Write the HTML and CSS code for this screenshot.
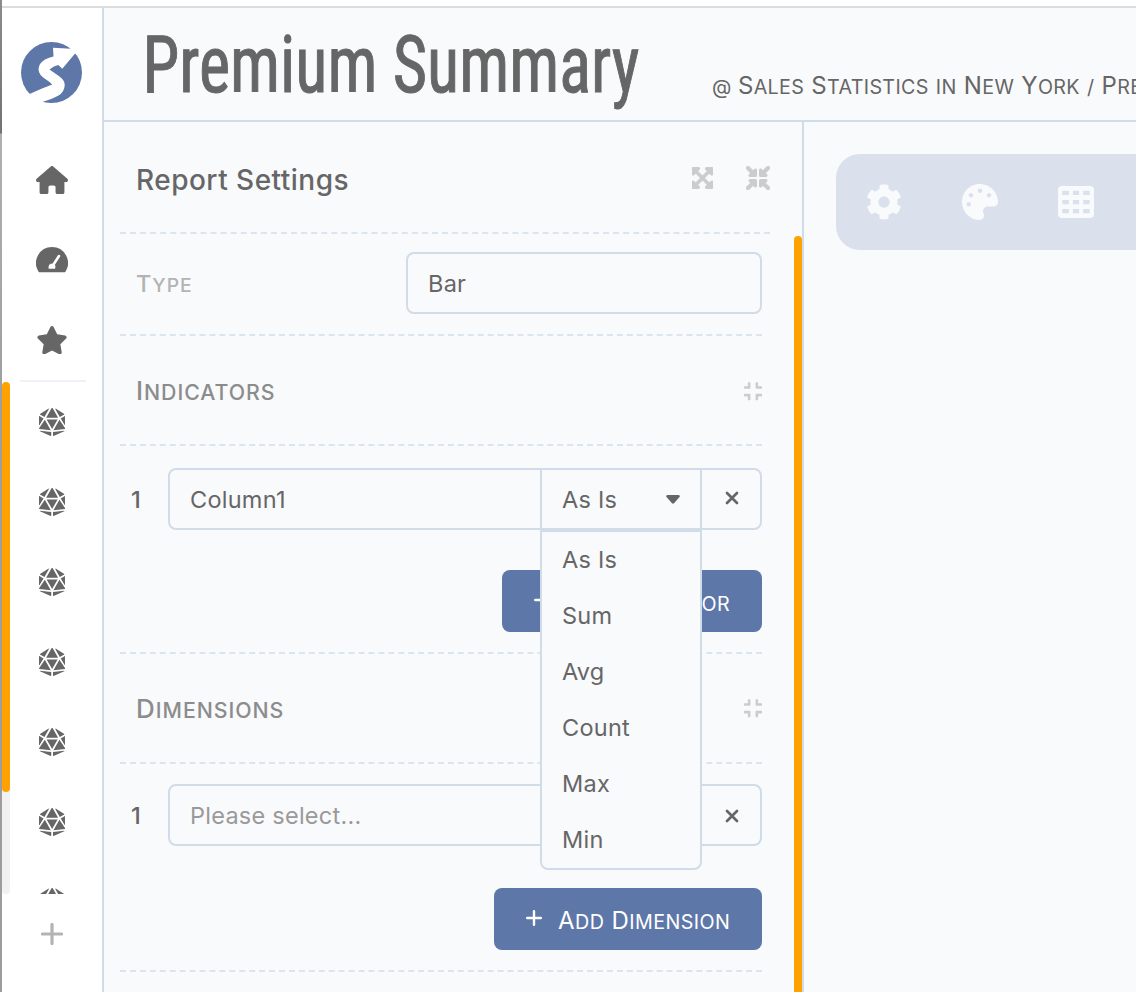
FILE: index.html
```html
<!DOCTYPE html>
<html lang="en">
<head>
<meta charset="utf-8">
<title>Premium Summary</title>
<link rel="stylesheet" href="styles.css">
</head>
<body>
<svg class="defs" aria-hidden="true">
  <symbol id="d20" viewBox="0 0 480 512"><path d="M106.75 215.06L1.2 370.95c-3.08 5 .1 11.5 5.93 12.14l208.26 22.07-108.64-190.1zM7.41 315.43L82.7 193.08 6.06 147.1c-2.67-1.62-6.06.3-6.06 3.43v162.81c0 4.03 5.29 5.53 7.41 2.09zM18.25 423.6l194.4 87.66c5.3 2.45 11.35-1.43 11.35-7.26v-65.67l-203.55-22.3c-4.45-.5-6.23 5.59-2.2 7.57zm81.22-257.78L179.4 22.88c4.34-7.06-3.59-15.25-10.78-11.14L17.81 110.35c-2.47 1.62-2.39 5.26.13 6.78l81.53 48.69zM240 176h109.21L253.63 7.62C250.5 2.54 245.25 0 240 0s-10.5 2.54-13.63 7.62L130.79 176H240zm233.94-28.9l-76.64 45.99 75.29 122.35c2.11 3.44 7.41 1.94 7.41-2.1V150.53c0-3.11-3.39-5.03-6.06-3.43zm-93.41 18.72l81.53-48.7c2.53-1.52 2.6-5.16.13-6.78l-150.81-98.6c-7.19-4.11-15.12 4.08-10.78 11.14l79.93 142.94zm79.02 250.21L256 438.32v65.67c0 5.84 6.05 9.71 11.35 7.26l194.4-87.66c4.03-1.97 2.25-8.06-2.2-7.56zm-86.3-200.97l-108.63 190.1 208.26-22.07c5.83-.65 9.01-7.14 5.93-12.14L373.25 215.06zM240 208H139.57L240 383.75 340.43 208H240z"/></symbol>
  <symbol id="compress" viewBox="0 0 448 512"><path d="M436 192H312c-13.3 0-24-10.7-24-24V44c0-6.600 5.400-12 12-12h40c6.600 0 12 5.400 12 12v84h84c6.600 0 12 5.400 12 12v40c0 6.600-5.400 12-12 12zm-276-24V44c0-6.600-5.400-12-12-12h-40c-6.600 0-12 5.400-12 12v84H12c-6.600 0-12 5.400-12 12v40c0 6.600 5.400 12 12 12h124c13.300 0 24-10.700 24-24zm0 300V344c0-13.300-10.700-24-24-24H12c-6.600 0-12 5.400-12 12v40c0 6.600 5.400 12 12 12h84v84c0 6.600 5.400 12 12 12h40c6.600 0 12-5.400 12-12zm192 0v-84h84c6.600 0 12-5.400 12-12v-40c0-6.600-5.400-12-12-12H312c-13.300 0-24 10.700-24 24v124c0 6.600 5.400 12 12 12h40c6.600 0 12-5.400 12-12z"/></symbol>
  <symbol id="cross" viewBox="0 0 14 14"><path d="M2 2L12 12M12 2L2 12" fill="none" stroke="currentColor" stroke-width="2.700" stroke-linecap="round"/></symbol>
</svg>
<div class="window">
  <div class="edge"></div>
  <div class="app">
    <nav class="sidebar">
      <svg class="logo" viewBox="0 0 61 61"><circle cx="30.500" cy="30.500" r="30.500" fill="#5e77a9"/><path d="M32 5.800L50 6.800L62 0L54.500 11L41.300 26.800L37.300 22.900Q33 23.500 28.500 27.500L38.500 34.500Q44 38.500 43.700 43Q43.500 50 37.500 53.500Q31 57 21 60L10 62L0 57L8.500 52L21 46.500Q27.500 44 31.200 42.500Q29 40 25 37.500Q17.500 33 17.500 27Q18 21 24 17.500Q28 15.500 32.500 14.500Z" fill="#fff"/></svg>
      <div class="nav-main">
        <div class="nav-item"><svg class="i-home" viewBox="0 0 576 512"><path d="M575.8 255.500c0 18-15 32.100-32 32.100h-32l.7 160.200c0 2.700-.2 5.400-.5 8.100V472c0 22.100-17.900 40-40 40H392c-22.100 0-40-17.900-40-40V384c0-17.700-14.300-32-32-32H256c-17.700 0-32 14.300-32 32v88c0 22.100-17.900 40-40 40H104c-22.100 0-40-17.900-40-40V287.600H32c-18 0-32-14-32-32.100c0-9 3-17 10-24L266.400 8c7-7 15-8 22-8s15 2 21 7L564.800 231.500c8 7 12 15 11 24z"/></svg></div>
        <div class="nav-item"><svg class="i-gauge" viewBox="0 0 32 26"><path d="M16 0a16 16 0 0 1 13.600 24.400Q29 25.300 28 25.300H4Q3 25.300 2.400 24.400A16 16 0 0 1 16 0z"/><path d="M23 9L17.500 17.500" stroke="#fff" stroke-width="2.600" stroke-linecap="round"/><path d="M12.600 21.800q-.7-4.600 3.400-5.200l3.300 2q.4 1.700-.3 3.200z" fill="#fff"/></svg></div>
        <div class="nav-item"><svg class="i-star" viewBox="0 0 576 512"><path d="M316.900 18C311.600 7 300.400 0 288.100 0s-23.400 7-28.800 18L195 150.300 51.400 171.500c-12 1.800-22 10.200-25.700 21.700s-.7 24.200 7.900 32.700L137.800 329 113.200 474.700c-2 12 3 24.200 12.900 31.300s23 8 33.800 2.300l128.300-68.500 128.300 68.500c10.800 5.700 23.900 4.900 33.800-2.300s14.900-19.300 12.900-31.300L438.500 329 542.700 225.900c8.600-8.500 11.700-21.200 7.900-32.700s-13.700-19.900-25.700-21.700L381.200 150.300 316.900 18z"/></svg></div>
      </div>
      <div class="nav-rule"></div>
      <div class="nav-scroll">
        <div class="side-track"><div class="side-thumb"></div></div>
        <div class="nav-list">
          <div class="nav-item"><svg class="i-d20"><use href="#d20"/></svg></div>
          <div class="nav-item"><svg class="i-d20"><use href="#d20"/></svg></div>
          <div class="nav-item"><svg class="i-d20"><use href="#d20"/></svg></div>
          <div class="nav-item"><svg class="i-d20"><use href="#d20"/></svg></div>
          <div class="nav-item"><svg class="i-d20"><use href="#d20"/></svg></div>
          <div class="nav-item"><svg class="i-d20"><use href="#d20"/></svg></div>
          <div class="nav-item"><svg class="i-d20"><use href="#d20"/></svg></div>
        </div>
      </div>
      <div class="nav-item nav-add"><svg class="i-add" viewBox="0 0 22 22"><path d="M11 1.500V20.500M1.500 11H20.500" fill="none" stroke="currentColor" stroke-width="3.200" stroke-linecap="round"/></svg></div>
    </nav>
    <main class="main">
      <header class="header">
        <svg class="title" role="heading" aria-level="1"><text x="-1.500" y="83.500" textLength="497" lengthAdjust="spacingAndGlyphs">Premium Summary</text></svg>
        <div class="crumb caps"><span class="at">@</span> <span>Sales</span> <span>Statistics</span> <i>in</i> <span>New</span> <span>York</span> <span>/</span> <span>Premium</span></div>
      </header>
      <div class="body">
        <section class="panel">
          <div class="panel-head">
            <h2>Report Settings</h2>
            <div class="head-icons">
              <svg class="i-max" viewBox="0 0 448 512"><path d="M448 344v112a23.940 23.940 0 0 1-24 24H312c-21.390 0-32.090-25.900-17-41l36.200-36.200L224 295.600 116.770 402.900 153 439c15.090 15.100 4.390 41-17 41H24a23.940 23.940 0 0 1-24-24V344c0-21.400 25.890-32.100 41-17l36.190 36.200L184.460 256 77.180 148.700 41 185c-15.100 15.100-41 4.400-41-17V56a23.940 23.940 0 0 1 24-24h112c21.390 0 32.090 25.900 17 41l-36.200 36.200L224 216.400l107.230-107.300L295 73c-15.090-15.100-4.390-41 17-41h112a23.940 23.940 0 0 1 24 24v112c0 21.400-25.890 32.100-41 17l-36.190-36.200L263.540 256l107.280 107.300L407 327.100c15.100-15.200 41-4.500 41 16.900z"/></svg>
              <svg class="i-min" viewBox="0 0 512 512"><path d="M200 288H88c-21.400 0-32.100 25.800-17 41l32.900 31-99.200 99.300c-6.200 6.200-6.200 16.400 0 22.600l25.400 25.400c6.200 6.200 16.400 6.200 22.600 0L152 408l31.100 33c15.100 15.100 40.900 4.400 40.900-17V312c0-13.300-10.700-24-24-24zm112-64h112c21.400 0 32.100-25.900 17-41l-33-31 99.300-99.300c6.200-6.200 6.200-16.400 0-22.600L481.900 4.700c-6.200-6.200-16.400-6.200-22.600 0L360 104l-31.100-33C313.800 55.900 288 66.600 288 88v112c0 13.300 10.700 24 24 24zm96 136l33-31.100c15.100-15.100 4.400-40.900-17-40.900H312c-13.300 0-24 10.700-24 24v112c0 21.400 25.900 32.100 41 17l31-32.900 99.300 99.300c6.200 6.200 16.400 6.200 22.600 0l25.400-25.400c6.200-6.200 6.200-16.400 0-22.600L408 360zM183 71.100L152 104 52.700 4.700c-6.200-6.200-16.400-6.200-22.600 0L4.700 30.100c-6.200 6.200-6.200 16.400 0 22.600L104 152l-33 31.100C55.900 198.200 66.600 224 88 224h112c13.300 0 24-10.700 24-24V88c0-21.300-25.900-32-41-16.900z"/></svg>
            </div>
          </div>
          <div class="panel-scroll">
            <div class="settings">
              <div class="type-row"><div class="type-label caps"><span>Type</span></div><div class="box type-box">Bar</div></div>
              <div class="section-head"><h3 class="caps"><span>Indicators</span></h3><svg class="i-compress"><use href="#compress"/></svg></div>
              <div class="section indicators">
                <div class="row">
                  <span class="num">1</span>
                  <div class="box group">
                    <div class="cell grow">Column1</div>
                    <div class="cell func">As Is<svg class="i-caret" viewBox="0 0 14 9"><path d="M1.300 0H12.700Q14.500.5 13.500 2L8 8.300Q7 9.200 6 8.300L.5 2Q-.5.5 1.300 0z"/></svg>
                      <div class="menu"><div>As Is</div><div>Sum</div><div>Avg</div><div>Count</div><div>Max</div><div>Min</div></div>
                    </div>
                    <div class="cell remove"><svg class="i-cross"><use href="#cross"/></svg></div>
                  </div>
                </div>
                <button class="add add-indicator"><svg class="i-plus" viewBox="0 0 16 16"><path d="M8 1.200V14.800M1.200 8H14.800" stroke="currentColor" stroke-width="2.400" stroke-linecap="round"/></svg><div class="caps"><span>Add</span> <span>Indicator</span></div></button>
              </div>
              <div class="section-head"><h3 class="caps"><span>Dimensions</span></h3><svg class="i-compress up"><use href="#compress"/></svg></div>
              <div class="section dimensions">
                <div class="row">
                  <span class="num">1</span>
                  <div class="box group">
                    <div class="cell grow placeholder">Please select...</div>
                    <div class="cell remove"><svg class="i-cross low"><use href="#cross"/></svg></div>
                  </div>
                </div>
                <button class="add add-dimension"><svg class="i-plus" viewBox="0 0 16 16"><path d="M8 1.200V14.800M1.200 8H14.800" stroke="currentColor" stroke-width="2.400" stroke-linecap="round"/></svg><div class="caps"><span>Add</span> <span>Dimension</span></div></button>
              </div>
            </div>
            <div class="panel-thumb"></div>
          </div>
        </section>
        <section class="canvas">
          <div class="toolbar">
            <svg class="tool" viewBox="0 0 512 512"><path d="M487.400 315.700l-42.600-24.600c4.300-23.200 4.300-47 0-70.200l42.600-24.600c4.900-2.800 7.100-8.600 5.500-14-11.100-35.600-30-67.800-54.700-94.600-3.800-4.100-10-5.100-14.800-2.300L380.800 110c-17.900-15.400-38.500-27.300-60.800-35.100V25.800c0-5.600-3.900-10.500-9.400-11.700-36.700-8.200-74.300-7.800-109.200 0-5.500 1.200-9.400 6.100-9.400 11.700V75c-22.200 7.900-42.800 19.800-60.800 35.100L88.700 85.500c-4.900-2.800-11-1.900-14.800 2.300-24.700 26.700-43.600 58.900-54.700 94.600-1.700 5.400.6 11.200 5.500 14L67.300 221c-4.300 23.200-4.300 47 0 70.200l-42.600 24.600c-4.900 2.800-7.100 8.600-5.500 14 11.100 35.600 30 67.800 54.700 94.600 3.800 4.100 10 5.100 14.800 2.300l42.600-24.600c17.900 15.400 38.500 27.300 60.800 35.100v49.200c0 5.600 3.900 10.500 9.400 11.700 36.700 8.200 74.300 7.800 109.200 0 5.500-1.200 9.400-6.100 9.400-11.700v-49.200c22.200-7.900 42.800-19.800 60.800-35.100l42.600 24.600c4.900 2.800 11 1.900 14.800-2.300 24.700-26.700 43.600-58.900 54.700-94.600 1.500-5.500-.7-11.300-5.600-14.100zM256 336c-44.100 0-80-35.900-80-80s35.900-80 80-80 80 35.900 80 80-35.900 80-80 80z"/></svg>
            <svg class="tool" viewBox="0 0 512 512"><path d="M204.300 5C104.900 24.400 24.800 104.300 5.200 203.400c-37 187 131.700 326.400 258.800 306.700 41.200-6.400 61.400-54.600 42.500-91.700-23.100-45.400 9.900-98.400 60.900-98.400h79.700c35.800 0 64.800-29.600 64.900-65.300C511.500 97.100 368.100-26.900 204.300 5zM96 320c-17.700 0-32-14.300-32-32s14.300-32 32-32 32 14.300 32 32-14.300 32-32 32zm32-128c-17.700 0-32-14.300-32-32s14.300-32 32-32 32 14.300 32 32-14.300 32-32 32zm128-64c-17.700 0-32-14.300-32-32s14.300-32 32-32 32 14.300 32 32-14.300 32-32 32zm128 64c-17.700 0-32-14.300-32-32s14.300-32 32-32 32 14.300 32 32-14.300 32-32 32z"/></svg>
            <svg class="tool" viewBox="0 0 36 36"><path fill-rule="evenodd" d="M4 2H32Q36 2 36 6V30Q36 34 32 34H4Q0 34 0 30V6Q0 2 4 2zM4.300 6.800v4.300h6.600v-4.300zM14.900 6.800v4.300h6.200v-4.300zM25.200 6.800v4.300h6.400v-4.300zM4.300 15.900v4.300h6.600v-4.300zM14.900 15.900v4.300h6.200v-4.300zM25.200 15.900v4.300h6.400v-4.300zM4.300 25v4.300h6.600v-4.300zM14.900 25v4.300h6.200v-4.300zM25.200 25v4.300h6.400v-4.300z"/></svg>
          </div>
        </section>
      </div>
    </main>
  </div>
</div>
</body>
</html>
```
FILE: styles.css
```css
* { box-sizing: border-box; }
body {
  margin: 0;
  width: 1136px;
  height: 992px;
  overflow: hidden;
  background: #fff;
  color: #666;
  font: 400 23.500px/1 Inter, sans-serif;
}
svg { display: block; flex: none; fill: currentColor; }
h2, h3 { margin: 0; font-weight: 500; }
.defs { display: none; }
.caps { white-space: nowrap; text-transform: uppercase; }
.caps span { display: inline-block; font-size: 0.820em; }
.caps span::first-letter { font-size: 1.220em; }
.caps i { font-style: normal; font-size: 0.820em; }
.window { display: flex; height: 992px; }
.edge { flex: none; width: 2px; background: linear-gradient(#8c8c8c 0, #737373 133px, #b0b0b0 134px, #9e9e9e 400px, #9c9c9c 100%); }
.app { flex: 1; min-width: 0; display: flex; margin-top: 6px; border-top: 2px solid #dadddf; height: 986px; }

.sidebar { flex: none; width: 102px; border-right: 2px solid #d0dce8; display: flex; flex-direction: column; background: #fff; }
.logo { width: 61px; height: 61px; margin: 34px 0 29px 19px; }
.nav-item { flex: none; height: 80px; display: flex; align-items: center; justify-content: center; }
.nav-main { height: 248px; padding-top: 8px; }
.nav-rule { width: 66px; height: 2px; margin: 0 0 0 18px; background: #eff1f6; }
.nav-scroll { height: 512px; display: flex; overflow: hidden; }
.side-track { width: 8px; height: 512px; border-radius: 4px; background: #f1f1f1; }
.side-thumb { height: 410px; border-radius: 4px; background: #ffa200; }
.nav-list { width: 84px; }
.nav-add { color: #b3b3b3; }
.i-home { width: 32px; height: 28.400px; }
.i-gauge { width: 32px; height: 26px; }
.i-star { width: 32px; height: 28.400px; }
.i-d20 { width: 26.250px; height: 28px; }
.i-add { width: 22px; height: 22px; }

.main { flex: 1; min-width: 0; background: #f9fafc; display: flex; flex-direction: column; }
.header { height: 114px; border-bottom: 2px solid #d0dce8; display: flex; overflow: hidden; }
.title { width: 510px; height: 112px; margin-left: 40px; overflow: visible; font: 400 80.500px "Liberation Sans Narrow", Roboto, sans-serif; font-stretch: 75%; stroke: #666; stroke-width: 1px; }
.crumb { margin: 66px 0 0 58px; font-size: 24px; letter-spacing: 0.350px; }
.crumb .at { font-size: 20px; letter-spacing: -0.500px; }
.crumb .at::first-letter { font-size: 20px; }
.body { flex: 1; min-height: 0; display: flex; }
.panel { flex: none; width: 700px; border-right: 2px solid #d0dce8; display: flex; flex-direction: column; }
.panel-head { height: 112px; margin: 0 32px 0 16px; padding: 0 0 0 16px; border-bottom: 2px dashed #dbe5ee; display: flex; align-items: center; justify-content: space-between; }
.panel-head h2 { font-size: 28px; padding-top: 6px; letter-spacing: 0.480px; }
.head-icons { display: flex; align-items: center; gap: 33.500px; color: #ccc; padding-top: 2px; }
.head-icons path { stroke: currentColor; stroke-width: 22px; }
.i-max { width: 21px; height: 24px; }
.i-min { width: 24px; height: 24px; }
.panel-scroll { flex: 1; min-height: 0; display: flex; justify-content: space-between; }
.settings { width: 642px; margin-left: 16px; }
.panel-thumb { width: 8px; margin-top: 2px; border-radius: 4px 4px 0 0; background: #ffa200; }
.type-row { height: 102px; border-bottom: 2px dashed #dbe5ee; padding: 18px 0 0 16px; display: flex; justify-content: space-between; }
.type-label { color: #b3b3b3; font-weight: 500; line-height: 64px; letter-spacing: 1px; }
.box { height: 62px; border: 2px solid #d0dce8; border-radius: 8px; line-height: 60px; letter-spacing: 0.250px; }
.type-box { width: 356px; padding-left: 20px; }
.section-head { height: 110px; border-bottom: 2px dashed #dbe5ee; padding-left: 16px; display: flex; align-items: center; justify-content: space-between; color: #8c8c8c; }
.section-head h3 { font-size: 26px; letter-spacing: 0.950px; padding-top: 2px; }
.i-compress { width: 18px; height: 20.500px; color: #ccc; margin-top: 2px; }
.i-compress.up { margin-top: 0; }
.section { border-bottom: 2px dashed #dbe5ee; display: flex; flex-direction: column; align-items: flex-end; height: 208px; }
.indicators { padding-top: 22px; }
.dimensions { padding-top: 20px; }
.row { display: flex; width: 100%; height: 62px; }
.num { width: 48px; padding-left: 11px; line-height: 64px; font-weight: 500; }
.group { flex: 1; display: flex; }
.cell { height: 58px; display: flex; align-items: center; position: relative; line-height: 60px; padding-top: 2px; }
.grow { flex: 1; padding-left: 20px; }
.func { width: 160px; border-left: 2px solid #d0dce8; padding: 2px 20px 0 20px; justify-content: space-between; }
.remove { width: 61px; border-left: 2px solid #d0dce8; justify-content: center; margin-right: -1px; }
.placeholder { color: #999; }
.i-caret { width: 14px; height: 9px; margin-top: -2px; }
.i-cross { width: 14px; height: 14px; margin-top: -5px; }
.i-cross.low { margin-top: -1px; }
.menu { position: absolute; z-index: 2; left: -2px; top: 58px; width: 162px; height: 342px; background: #f9fafc; border: 2px solid #d0dce8; border-top-width: 4px; border-radius: 0 0 8px 8px; padding-left: 20px; }
.menu div { height: 56px; line-height: 56px; }
.add { border: 0; height: 62px; border-radius: 8px; background: #5e77a9; color: #fff; display: flex; align-items: center; padding: 0 0 0 32px; gap: 16px; font: 400 24px/1 Inter, sans-serif; letter-spacing: 0.450px; white-space: nowrap; }
.add .caps { padding-top: 4px; }
.i-plus { width: 16px; height: 16px; margin-top: -2px; }
.add-indicator { margin-top: 40px; width: 260px; }
.add-dimension { margin-top: 42px; width: 268px; }
.canvas { flex: 1; min-width: 0; padding: 32px 0 0 32px; overflow: hidden; }
.toolbar { width: 500px; height: 96px; border-radius: 24px; background: #dae0ec; color: #f9fafc; display: flex; align-items: center; gap: 60px; padding-left: 30px; }
.tool { width: 36px; height: 36px; }
```
